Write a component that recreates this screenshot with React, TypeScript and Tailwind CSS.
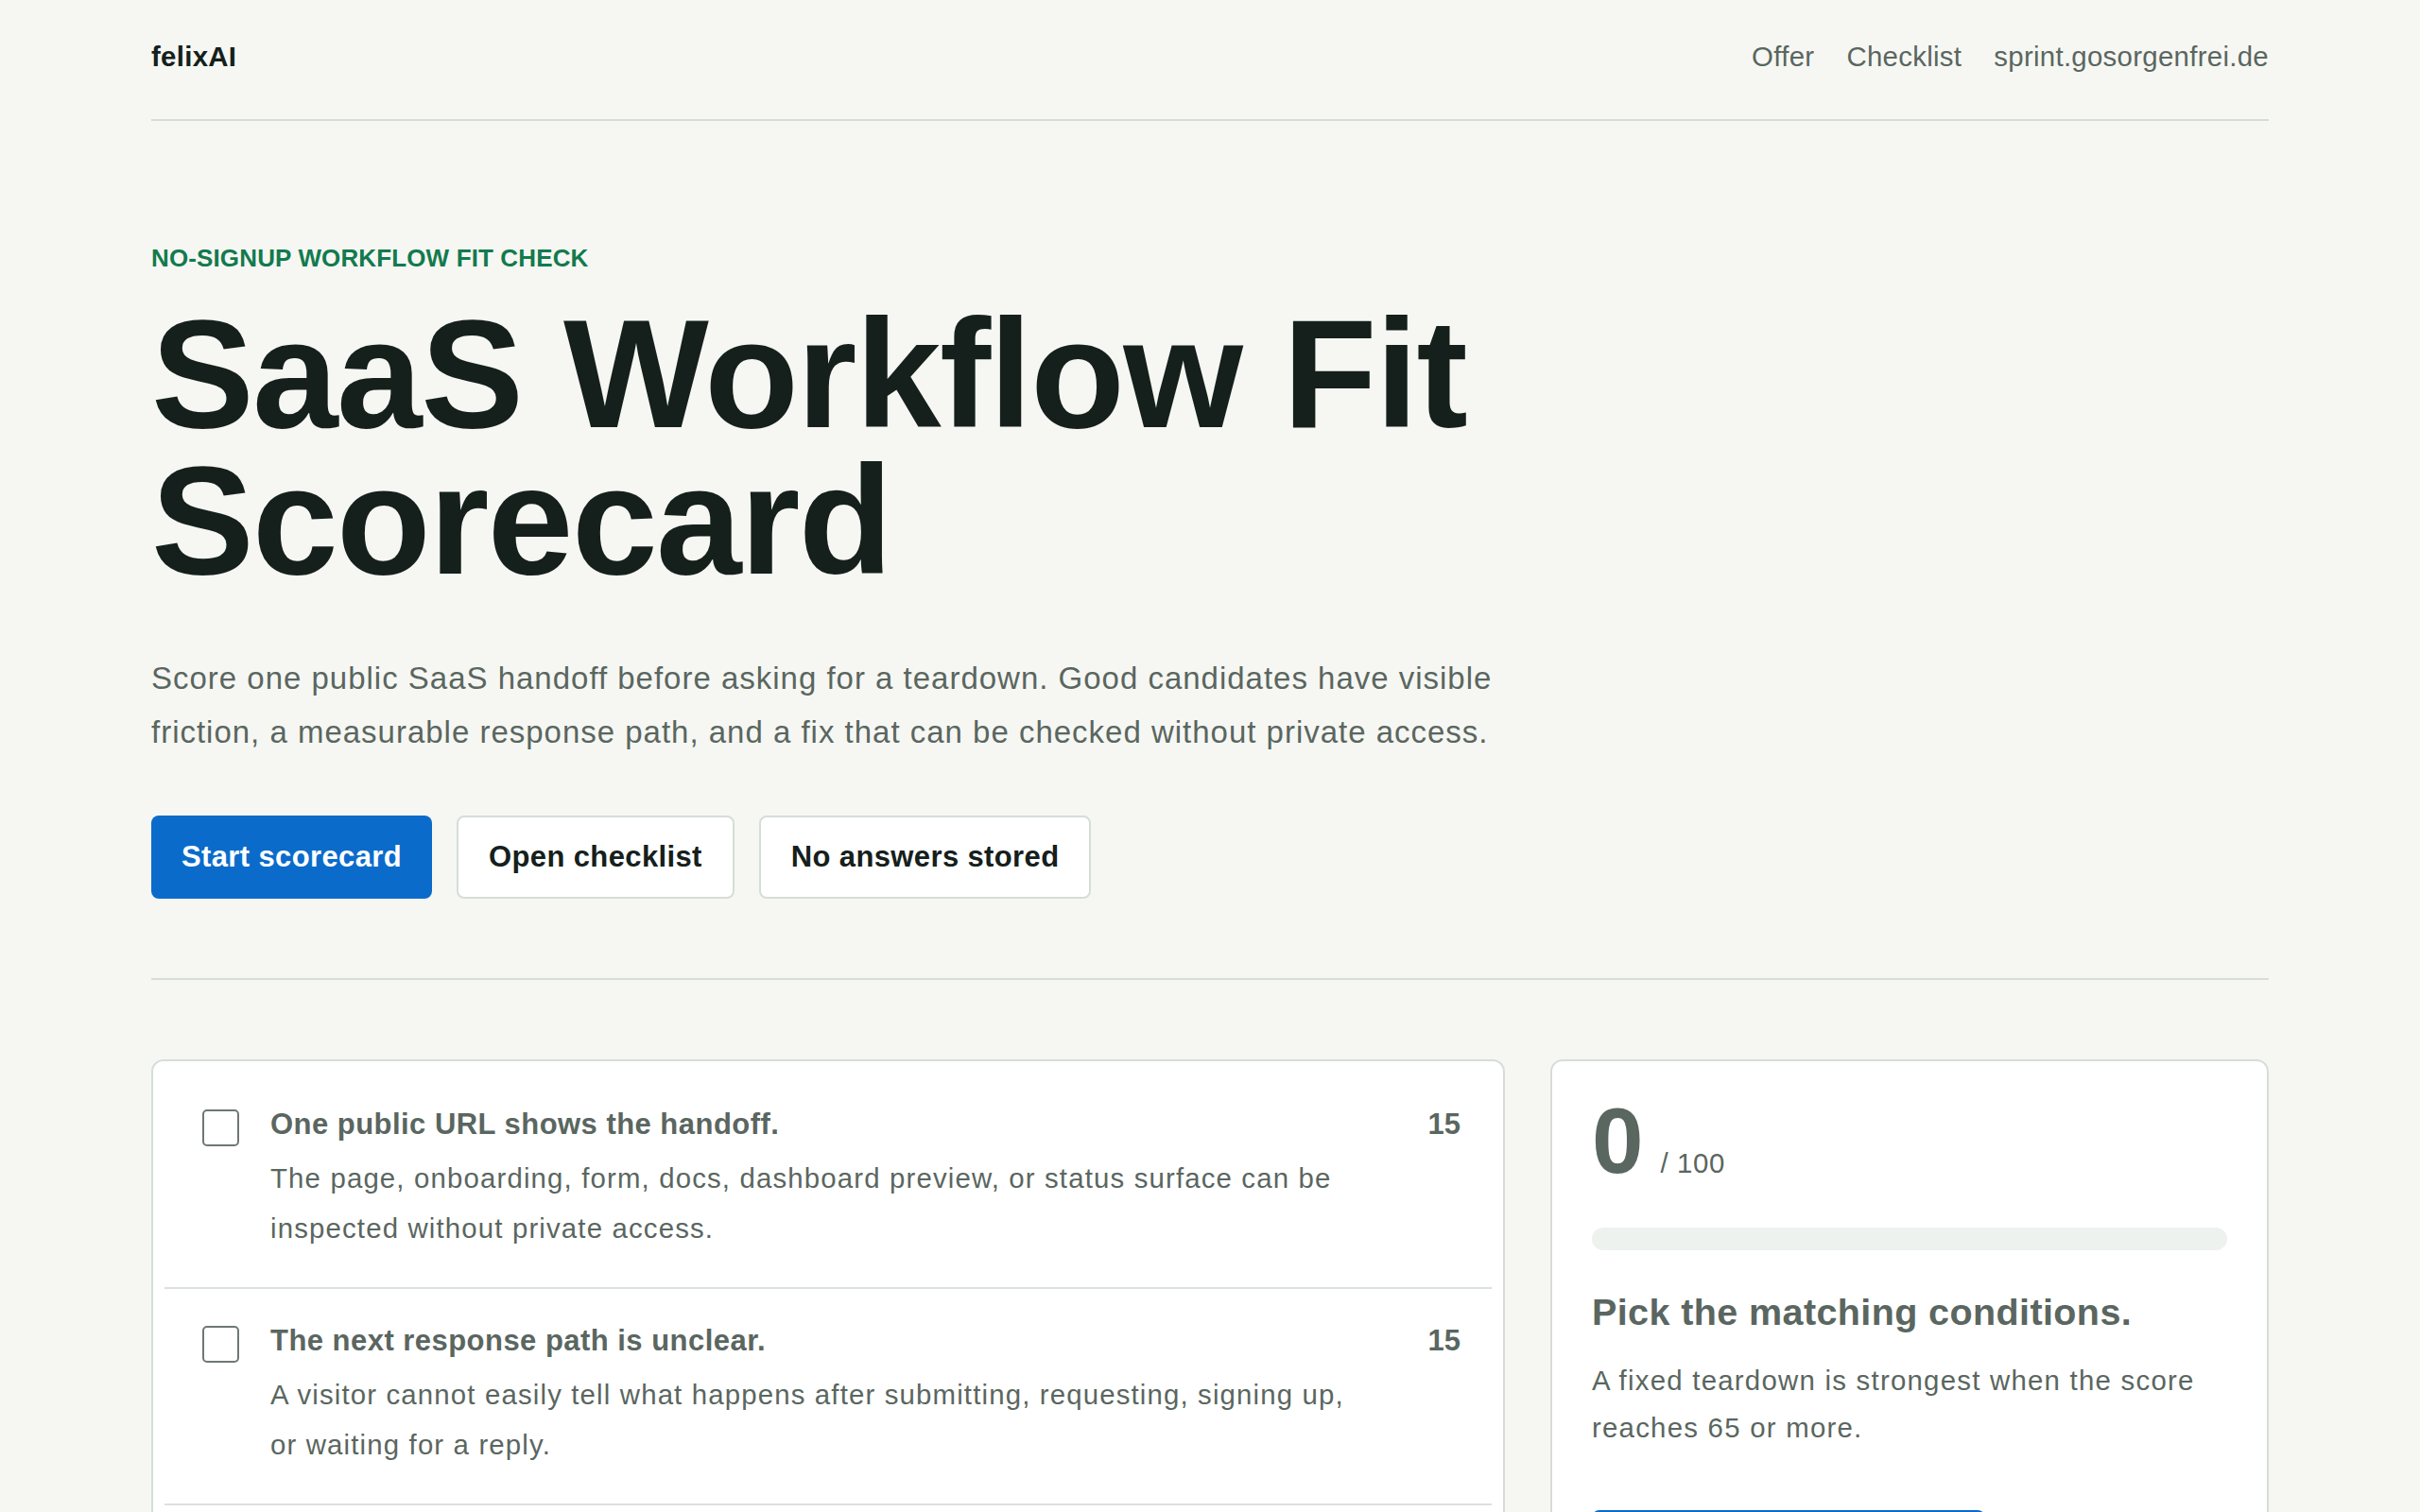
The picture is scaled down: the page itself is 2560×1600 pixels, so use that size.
import React from "react";

const items = [
  {
    title: "One public URL shows the handoff.",
    desc: "The page, onboarding, form, docs, dashboard preview, or status surface can be inspected without private access.",
    points: 15,
  },
  {
    title: "The next response path is unclear.",
    desc: "A visitor cannot easily tell what happens after submitting, requesting, signing up, or waiting for a reply.",
    points: 15,
  },
  {
    title: "The friction repeats for every visitor.",
    desc: "The same confusing step shows up on each visit, so a single fix improves the whole flow.",
    points: 15,
  },
  {
    title: "A fix can be checked from outside.",
    desc: "The improvement can be verified on the public surface without logging in or asking for data.",
    points: 15,
  },
];

function Item({ title, desc, points, last }: { title: string; desc: string; points: number; last?: boolean }) {
  return (
    <div className={`flex px-[33px] pt-[35px] pb-[36px] ${last ? "" : "border-b-2 border-[#dbe1dc]"}`}>
      <div className="w-[79px] shrink-0 pt-[4px]">
        <div className="ml-[7px] w-[39px] h-[39px] rounded-[5px] border-2 border-[#6f7873] bg-white" />
      </div>
      <div className="flex-1 min-w-0">
        <div className="text-[31px] leading-[40px] font-bold tracking-[0.015em] text-[#5a6660]">{title}</div>
        <div className="mt-[10px] text-[29.4px] leading-[53px] tracking-[0.039em] text-[#5a6660]">{desc}</div>
      </div>
      <div className="w-[104px] shrink-0 text-right text-[31px] leading-[40px] font-bold text-[#5a6660]">{points}</div>
    </div>
  );
}

export default function App() {
  return (
    <div
      className="min-h-screen bg-[#f6f7f3] text-[#15201c]"
      style={{ fontFamily: '"Liberation Sans", Arial, Helvetica, sans-serif' }}
    >
      <div className="w-[2240px] mx-auto">
        <header className="h-[128px] flex items-center justify-between border-b-2 border-[#d6ddd8] pb-[5px]">
          <div className="text-[29.4px] font-bold tracking-[0.01em] text-[#15201c]">felixAI</div>
          <nav className="flex items-center gap-[34px] text-[29.4px] tracking-[0.01em] text-[#5a6660]">
            <span>Offer</span>
            <span>Checklist</span>
            <span>sprint.gosorgenfrei.de</span>
          </nav>
        </header>

        <section className="pt-[130px] pb-[84px] border-b-2 border-[#d6ddd8]">
          <div className="text-[26px] leading-[31px] font-bold tracking-[0.005em] text-[#137a4e]">NO-SIGNUP WORKFLOW FIT CHECK</div>
          <h1 className="mt-[29px] text-[163px] leading-[155px] font-bold tracking-[-0.01em] text-[#15201c]">
            SaaS Workflow Fit
            <br />
            Scorecard
          </h1>
          <p className="mt-[61px] max-w-[1480px] text-[33px] leading-[57px] tracking-[0.03em] text-[#5a6660]">
            Score one public SaaS handoff before asking for a teardown. Good candidates have visible friction, a measurable response path, and a fix that can be checked without private access.
          </p>
          <div className="mt-[60px] flex gap-[26px]">
            <button className="h-[88px] px-[32px] rounded-[8px] bg-[#0b6bcb] text-white text-[31px] font-bold tracking-[0.012em]">
              Start scorecard
            </button>
            <button className="h-[88px] px-[32px] rounded-[8px] bg-white border-2 border-[#d6ddd8] text-[#15201c] text-[31px] font-bold tracking-[0.012em]">
              Open checklist
            </button>
            <button className="h-[88px] px-[32px] rounded-[8px] bg-white border-2 border-[#d6ddd8] text-[#15201c] text-[31px] font-bold tracking-[0.012em]">
              No answers stored
            </button>
          </div>
        </section>

        <section className="pt-[84px] pb-[120px] grid grid-cols-[1fr_760px] gap-[48px] items-start">
          <div className="bg-white border-2 border-[#d6ddd8] rounded-[13px] p-[12px]">
            {items.map((it, i) => (
              <Item key={i} {...it} last={i === items.length - 1} />
            ))}
          </div>
          <div className="bg-white border-2 border-[#d6ddd8] rounded-[13px] px-[42px] pt-[35px] pb-[42px]">
            <div className="flex items-baseline">
              <span className="text-[98px] leading-[98px] font-bold text-[#5a6660]">0</span>
              <span className="ml-[18px] text-[29.4px] tracking-[0.02em] text-[#5a6660]">/ 100</span>
            </div>
            <div className="mt-[43px] h-[24px] rounded-full bg-[#edf2ef]" />
            <div className="mt-[40px] text-[39.5px] leading-[51px] font-bold tracking-[0.01em] text-[#5a6660]">Pick the matching conditions.</div>
            <p className="mt-[22px] text-[29.4px] leading-[50px] tracking-[0.042em] text-[#5a6660]">
              A fixed teardown is strongest when the score reaches 65 or more.
            </p>
            <button className="mt-[62px] h-[88px] w-[416px] rounded-[8px] bg-[#0b6bcb] text-white text-[31px] font-bold">
              Request teardown
            </button>
          </div>
        </section>
      </div>
    </div>
  );
}
